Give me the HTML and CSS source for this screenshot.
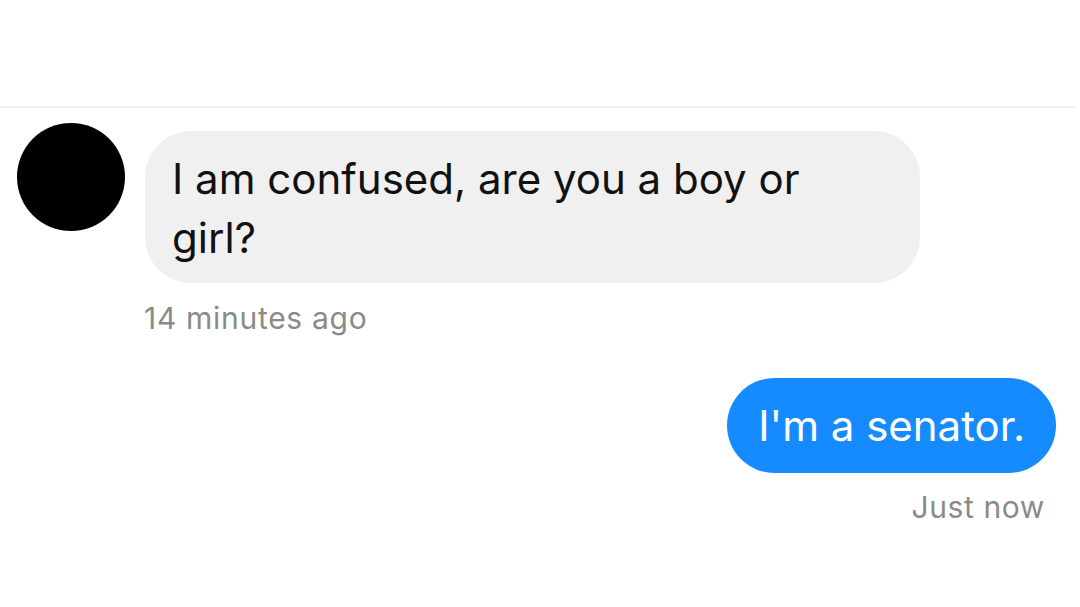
FILE: index.html
```html
<!DOCTYPE html>
<html>
<head>
<meta charset="utf-8">
<link rel="stylesheet" href="styles.css">
</head>
<body>
<div class="screen">
  <div class="top"></div>
  <div class="thread">
    <div class="msg-in">
      <div class="avatar"></div>
      <div class="bubble-in">I am confused, are you a boy or<br>girl?</div>
    </div>
    <div class="time-in">14 minutes ago</div>
    <div class="msg-out">
      <div class="bubble-out">I'm a senator.</div>
    </div>
    <div class="time-out">Just now</div>
  </div>
</div>
</body>
</html>
```
FILE: styles.css
```css
* { box-sizing: border-box; }
html, body { margin: 0; padding: 0; background: #fff; }
body { font-family: Inter, "Liberation Sans", sans-serif; width: 1080px; height: 607px; overflow: hidden; }
.top { height: 108px; border-bottom: 2px solid #f1f1f1; margin-right: 5px; }
.thread { display: flex; flex-direction: column; }
.msg-in { display: flex; align-items: flex-start; padding-left: 17px; margin-top: 15px; }
.avatar { width: 108px; height: 108px; border-radius: 50%; background: #000; flex: none; }
.bubble-in {
  margin-left: 20px; margin-top: 8px;
  width: 775px; background: #f0f0f0; border-radius: 46px;
  padding: 18px 27px 16px; font-size: 42px; line-height: 59px; color: #111;
}
.time-in { margin-left: 144px; margin-top: 17px; font-size: 30px; letter-spacing: 0.7px; color: #8a8a8a; }
.msg-out { display: flex; justify-content: flex-end; padding-right: 24px; margin-top: 42px; }
.bubble-out {
  background: #168aff; color: #fff; height: 95px; border-radius: 48px;
  padding: 0 31px; font-size: 42px; display: flex; align-items: center;
}
.time-out { align-self: flex-end; margin-right: 35px; margin-top: 16px; font-size: 30px; letter-spacing: 0.6px; color: #8a8a8a; }
```
